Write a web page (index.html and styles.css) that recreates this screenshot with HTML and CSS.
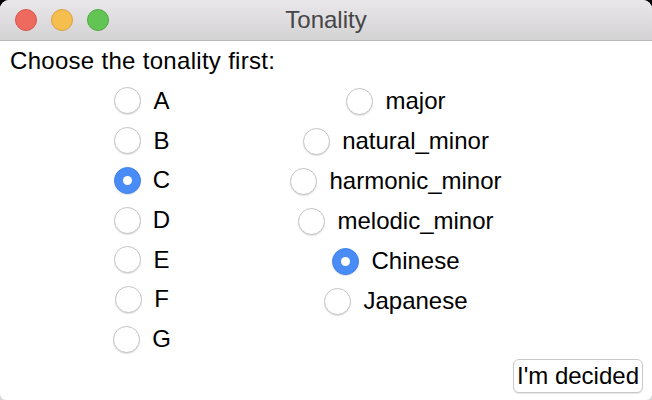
FILE: index.html
```html
<!DOCTYPE html>
<html lang="en">
<head>
<meta charset="utf-8">
<title>Tonality</title>
<link rel="stylesheet" href="styles.css">
</head>
<body>
<div class="window">
  <div class="titlebar">
    <div class="lights">
      <span class="light red"></span>
      <span class="light yellow"></span>
      <span class="light green"></span>
    </div>
    <div class="title">Tonality</div>
    <div class="spacer"></div>
  </div>
  <div class="content">
    <div class="prompt">Choose the tonality first:</div>
    <div class="columns">
      <div class="col col-left">
        <label class="row"><span class="radio"></span><span class="text">A</span></label>
        <label class="row"><span class="radio"></span><span class="text">B</span></label>
        <label class="row"><span class="radio checked"></span><span class="text">C</span></label>
        <label class="row"><span class="radio"></span><span class="text">D</span></label>
        <label class="row"><span class="radio"></span><span class="text">E</span></label>
        <label class="row"><span class="radio"></span><span class="text">F</span></label>
        <label class="row"><span class="radio"></span><span class="text">G</span></label>
      </div>
      <div class="col col-right">
        <label class="row"><span class="radio"></span><span class="text">major</span></label>
        <label class="row"><span class="radio"></span><span class="text">natural_minor</span></label>
        <label class="row"><span class="radio"></span><span class="text">harmonic_minor</span></label>
        <label class="row"><span class="radio"></span><span class="text">melodic_minor</span></label>
        <label class="row"><span class="radio checked"></span><span class="text">Chinese</span></label>
        <label class="row"><span class="radio"></span><span class="text">Japanese</span></label>
      </div>
    </div>
    <div class="footer">
      <button class="btn">I'm decided</button>
    </div>
  </div>
</div>
</body>
</html>
```

FILE: styles.css
```css
html {
  background: linear-gradient(#000 0, #000 50%, #d8d8d8 100%);
  height: 100%;
}
body {
  margin: 0;
  width: 652px;
  height: 400px;
  font-family: "Liberation Sans", Arial, sans-serif;
  font-size: 24px;
  color: #000;
}
.window {
  width: 652px;
  height: 400px;
  background: #fff;
  border-radius: 9px 9px 6px 6px;
  overflow: hidden;
  display: flex;
  flex-direction: column;
}
.titlebar {
  height: 40px;
  flex: none;
  background: linear-gradient(#e9e7e9, #d4d3d4);
  border-bottom: 1px solid #b9b9b9;
  display: grid;
  grid-template-columns: 1fr auto 1fr;
  align-items: center;
}
.lights {
  display: flex;
  gap: 14px;
  padding-left: 15px;
}
.light {
  width: 22px;
  height: 22px;
  border-radius: 50%;
  box-sizing: border-box;
}
.red { background: #ee6a5f; border: 1px solid #d5544b; }
.yellow { background: #f5be4f; border: 1px solid #d8a13f; }
.green { background: #61c454; border: 1px solid #50a83f; }
.title {
  color: #464646;
  font-size: 24px;
  line-height: 40px;
}
.content {
  flex: 1;
  display: flex;
  flex-direction: column;
}
.prompt {
  margin-top: 5px;
  padding-left: 10px;
  line-height: 30px;
  height: 30px;
  letter-spacing: 0.3px;
}
.columns {
  margin-top: 5px;
  height: 278px;
  display: flex;
  padding-left: 10px;
}
.col {
  display: flex;
  flex-direction: column;
  align-items: center;
}
.col-left { width: 264px; }
.col-right { width: 244px; }
.row {
  height: 40px;
  display: flex;
  align-items: center;
  gap: 12px;
}
.radio {
  width: 27px;
  height: 27px;
  box-sizing: border-box;
  border-radius: 50%;
  background: #fff;
  border: 1px solid #c4c4c4;
  box-shadow: 0 1px 1px rgba(0,0,0,0.12);
  display: flex;
  align-items: center;
  justify-content: center;
}
.radio.checked {
  background: #4a8cf6;
  border-color: #3f81ee;
}
.radio.checked::after {
  content: "";
  width: 9px;
  height: 9px;
  border-radius: 50%;
  background: #fff;
}
.text {
  line-height: 30px;
}
.footer {
  display: flex;
  justify-content: flex-end;
  padding-right: 9px;
}
.btn {
  height: 34px;
  padding: 0 3px;
  font-family: inherit;
  font-size: 24px;
  color: #000;
  background: #fff;
  border: 1px solid #c9c9c9;
  border-radius: 6px;
  box-shadow: 0 1px 1px rgba(0,0,0,0.1);
}
```
